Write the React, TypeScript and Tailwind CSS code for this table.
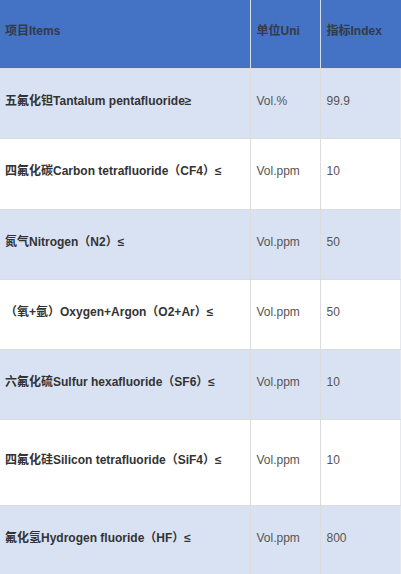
const rows = [
  { cn: "五氟化钽", en: "Tantalum pentafluoride≥", unit: "Vol.%", value: "99.9", h: "h-[70px]" },
  { cn: "四氟化碳", en: "Carbon tetrafluoride（CF4）≤", unit: "Vol.ppm", value: "10", h: "h-[71px]" },
  { cn: "氮气", en: "Nitrogen（N2）≤", unit: "Vol.ppm", value: "50", h: "h-[70px]" },
  { cn: "（氧+氩）", en: "Oxygen+Argon（O2+Ar）≤", unit: "Vol.ppm", value: "50", h: "h-[70px]" },
  { cn: "六氟化硫", en: "Sulfur hexafluoride（SF6）≤", unit: "Vol.ppm", value: "10", h: "h-[70px]" },
  { cn: "四氟化硅", en: "Silicon tetrafluoride（SiF4）≤", unit: "Vol.ppm", value: "10", h: "h-[86px]" },
  { cn: "氟化氢", en: "Hydrogen fluoride（HF）≤", unit: "Vol.ppm", value: "800", h: "h-[70px]" },
];

export default function App() {
  return (
    <div className="w-[401px] h-[574px] overflow-hidden bg-white font-['Liberation_Sans','Noto_Sans_CJK_SC',sans-serif] text-[12px]">
      <table className="w-[401px] table-fixed border-collapse">
        <colgroup>
          <col className="w-[250px]" />
          <col className="w-[70px]" />
          <col />
        </colgroup>
        <thead>
          <tr className="h-[68px] bg-[#4472c4] text-[#333a48] font-bold">
            <td className="border border-[#d8dde6] border-l-0 border-t-0 pl-[5px] pb-[5px] text-left align-middle">项目Items</td>
            <td className="border border-[#d8dde6] border-t-0 pl-[6px] pb-[5px] align-middle">单位Uni</td>
            <td className="border border-[#d8dde6] border-t-0 border-r-0 pl-[6px] pb-[5px] align-middle">指标Index</td>
          </tr>
        </thead>
        <tbody>
          {rows.map((r, i) => (
            <tr key={i} className={`${r.h} ${i % 2 === 0 ? "bg-[#d9e2f3]" : "bg-white"}`}>
              <td className="border border-[#dcdcdc] border-l-0 pl-[5px] pb-[5px] align-middle text-[#333] whitespace-nowrap">
                <span className="font-bold">{r.cn}</span>
                <span className="font-semibold">{r.en}</span>
              </td>
              <td className="border border-[#dcdcdc] pl-[6px] pb-[5px] align-middle text-[#555]">{r.unit}</td>
              <td className="border border-[#dcdcdc] border-r-[#e4e8ef] pl-[6px] pb-[5px] align-middle text-[#555]">{r.value}</td>
            </tr>
          ))}
        </tbody>
      </table>
    </div>
  );
}
